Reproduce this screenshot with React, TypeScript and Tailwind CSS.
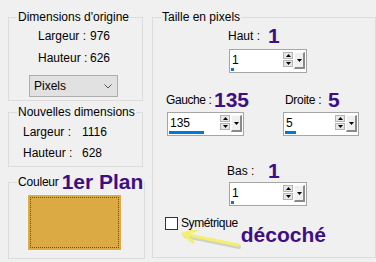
import React from "react";

const Big: React.FC<{ children: React.ReactNode }> = ({ children }) => (
  <span className="whitespace-nowrap font-['Liberation_Sans'] text-[21px] font-bold leading-[16px] text-[#3d0f83]">
    {children}
  </span>
);

const Tri: React.FC<{ up?: boolean }> = ({ up }) => (
  <svg width="5" height="3" viewBox="0 0 5 3">
    <polygon points={up ? "2.5,0 5,3 0,3" : "0,0 5,0 2.5,3"} fill="#000" />
  </svg>
);

// spin box with blue progress bar, like PSP numeric edit
const Spin: React.FC<{ value: string; bar: number; className: string }> = ({ value, bar, className }) => (
  <div className={"flex h-[24px] border border-[#a5a5a5] bg-white " + className}>
    <div className="relative flex-1">
      <div className="pl-[2px] pt-[2px] leading-[16px]">{value}</div>
      <div className="absolute bottom-[1px] left-[1px] h-[3px] bg-[#0078d7]" style={{ width: bar }} />
    </div>
    <div className="flex w-[10px] flex-col gap-[1px] pt-[2px]">
      <div className="flex h-[7px] items-center justify-center border border-[#b5b5b5] bg-[#e6e6e6]">
        <Tri up />
      </div>
      <div className="flex h-[7px] items-center justify-center border border-[#b5b5b5] bg-[#e6e6e6]">
        <Tri />
      </div>
    </div>
    <div className="ml-[1px] mr-[1px] mt-[2px] mb-[3px] flex w-[11px] items-center justify-center border-t border-l border-r-2 border-b-2 border-t-[#fafafa] border-l-[#fafafa] border-r-[#8a8a8a] border-b-[#8a8a8a] bg-[#f0f0f0]">
      <Tri />
    </div>
  </div>
);

const App: React.FC = () => {
  return (
    <div className="relative flex h-[262px] w-[376px] overflow-hidden bg-[#f0f0f0] pl-[8px] pt-[9px] font-['Liberation_Sans'] text-[12px] text-black">
      {/* left column */}
      <div className="flex w-[135px] flex-col">
        <fieldset className="h-[92px] border border-[#dcdcdc]">
          <legend className="ml-[8px] whitespace-nowrap px-[1px] leading-[16px]">Dimensions d'origine</legend>
          <div className="mt-[3px] flex pl-[29px] leading-[16px]">
            <span className="w-[52px] whitespace-nowrap">Largeur :</span>
            <span>976</span>
          </div>
          <div className="mt-[6px] flex pl-[29px] leading-[16px]">
            <span className="w-[52px] whitespace-nowrap">Hauteur :</span>
            <span>626</span>
          </div>
          <div className="ml-[20px] mt-[9px] flex h-[22px] w-[89px] items-center justify-between border border-[#adadad] bg-[#e1e1e1] pl-[4px] pr-[5px]">
            <span>Pixels</span>
            <svg width="8" height="5" viewBox="0 0 8 5">
              <polyline points="0.5,0.5 4,4 7.5,0.5" fill="none" stroke="#555" strokeWidth="1" />
            </svg>
          </div>
        </fieldset>

        <fieldset className="mt-[3px] h-[63px] border border-[#dcdcdc]">
          <legend className="ml-[8px] whitespace-nowrap px-[1px] leading-[16px]">Nouvelles dimensions</legend>
          <div className="mt-[4px] flex pl-[14px] leading-[16px]">
            <span className="w-[59px] whitespace-nowrap">Largeur :</span>
            <span>1116</span>
          </div>
          <div className="mt-[5px] flex pl-[14px] leading-[16px]">
            <span className="w-[59px] whitespace-nowrap">Hauteur :</span>
            <span>628</span>
          </div>
        </fieldset>

        <fieldset className="mt-[7px] h-[85px] border border-[#dcdcdc]">
          <legend className="ml-[8px] flex h-[16px] items-center gap-[3px] whitespace-nowrap px-[1px] leading-[16px]">
            <span className="tracking-[-0.2px]">Couleur</span>
            <Big>1er Plan</Big>
          </legend>
          <div className="ml-[18px] mt-[4px] h-[57px] w-[95px] border border-[#f4f4f4] bg-[#dbaa44] p-[2px]">
            <div className="h-full w-full border border-dotted border-[#2a4fc0]" />
          </div>
        </fieldset>
      </div>

      {/* right group */}
      <fieldset className="relative ml-[9px] h-[249px] w-[240px] border border-[#dcdcdc]">
        <legend className="ml-[8px] whitespace-nowrap px-[1px] leading-[16px]">Taille en pixels</legend>

        <div className="mt-[3px] flex h-[16px] items-center pl-[75px]">
          <span className="w-[40px] whitespace-nowrap">Haut :</span>
          <Big>1</Big>
        </div>
        <Spin value="1" bar={3} className="ml-[76px] mt-[5px] w-[78px]" />

        <div className="mt-[19px] flex h-[16px] items-center pl-[13px]">
          <div className="flex w-[119px] items-center">
            <span className="w-[48px] whitespace-nowrap tracking-[-0.4px]">Gauche :</span>
            <Big>135</Big>
          </div>
          <span className="w-[43px] whitespace-nowrap tracking-[-0.3px]">Droite :</span>
          <Big>5</Big>
        </div>
        <div className="mt-[4px] flex pl-[14px]">
          <Spin value="135" bar={35} className="w-[77px]" />
          <Spin value="5" bar={11} className="ml-[39px] w-[76px]" />
        </div>

        <div className="mt-[27px] flex h-[16px] items-center pl-[74px]">
          <span className="w-[41px] whitespace-nowrap">Bas :</span>
          <Big>1</Big>
        </div>
        <Spin value="1" bar={3} className="ml-[76px] mt-[3px] w-[78px]" />

        <div className="ml-[12px] mt-[11px] flex items-start">
          <div className="h-[13px] w-[13px] border border-[#333] bg-white" />
          <span className="ml-[3px] leading-[13px] tracking-[-0.4px]">Symétrique</span>
          <span className="ml-[3px] mt-[10px]">
            <Big>décoché</Big>
          </span>
        </div>

        {/* yellow arrow pointing at the checkbox label */}
        <svg className="absolute left-[24px] top-[205px]" width="70" height="24" viewBox="0 0 70 24">
          <g stroke="#9a9a70" strokeOpacity="0.35" strokeWidth="4" fill="none" strokeLinecap="round">
            <line x1="8" y1="6" x2="62" y2="17" />
          </g>
          <g stroke="#f3ef72" strokeWidth="3" fill="none" strokeLinecap="round" strokeLinejoin="round">
            <line x1="7" y1="4" x2="61" y2="15" />
            <polyline points="20,0 6,4 16,12" />
          </g>
        </svg>
      </fieldset>
    </div>
  );
};

export default App;
